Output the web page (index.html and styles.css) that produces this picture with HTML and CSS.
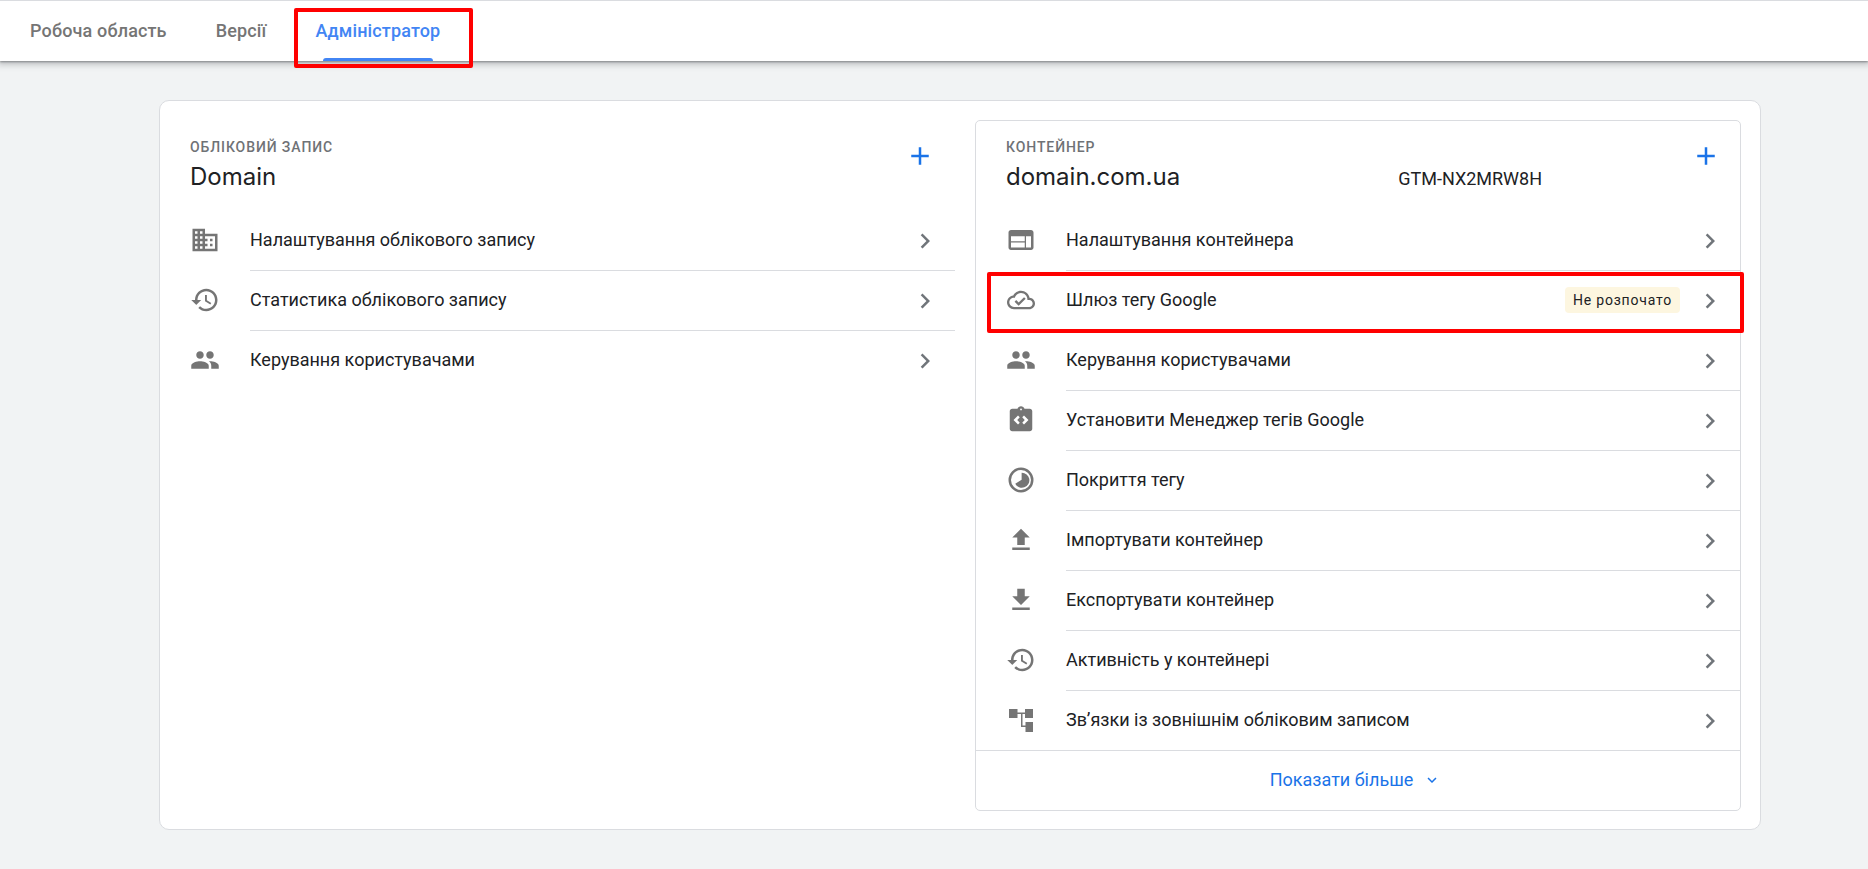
FILE: index.html
```html
<!DOCTYPE html>
<html lang="uk">
<head>
<meta charset="utf-8">
<title>Адміністратор</title>
<link rel="stylesheet" href="styles.css">
</head>
<body>
<svg class="defs" width="0" height="0" aria-hidden="true">
  <symbol id="i-domain" viewBox="0 0 24 24"><path d="M12 7V3H2v18h20V7H12zM6 19H4v-2h2v2zm0-4H4v-2h2v2zm0-4H4V9h2v2zm0-4H4V5h2v2zm4 12H8v-2h2v2zm0-4H8v-2h2v2zm0-4H8V9h2v2zm0-4H8V5h2v2zm10 12h-8v-2h2v-2h-2v-2h2v-2h-2V9h8v10zm-2-8h-2v2h2v-2zm0 4h-2v2h2v-2z"/></symbol>
  <symbol id="i-history" viewBox="0 0 24 24"><path d="M13 3c-4.97 0-9 4.03-9 9H1l3.89 3.89.07.14L9 12H6c0-3.87 3.13-7 7-7s7 3.13 7 7-3.13 7-7 7c-1.93 0-3.68-.79-4.94-2.06l-1.42 1.42C8.27 19.99 10.51 21 13 21c4.97 0 9-4.03 9-9s-4.03-9-9-9zm-1 5v5l4.28 2.54.72-1.21-3.5-2.08V8H12z"/></symbol>
  <symbol id="i-people" viewBox="0 0 24 24"><path d="M16 11c1.66 0 2.99-1.34 2.99-3S17.66 5 16 5c-1.66 0-3 1.34-3 3s1.34 3 3 3zm-8 0c1.66 0 2.99-1.34 2.99-3S9.66 5 8 5C6.34 5 5 6.34 5 8s1.34 3 3 3zm0 2c-2.33 0-7 1.17-7 3.5V19h14v-2.5c0-2.33-4.67-3.5-7-3.5zm8 0c-.29 0-.62.02-.97.05 1.16.84 1.97 1.97 1.97 3.45V19h6v-2.5c0-2.33-4.67-3.5-7-3.5z"/></symbol>
  <symbol id="i-web" viewBox="0 0 24 24"><path d="M20 4H4c-1.1 0-1.99.9-1.99 2L2 18c0 1.1.9 2 2 2h16c1.1 0 2-.9 2-2V6c0-1.1-.9-2-2-2zm-5 14H4v-4h11v4zm0-5H4V9h11v4zm5 5h-4V9h4v9z"/></symbol>
  <symbol id="i-cloud" viewBox="0 0 24 24"><path d="M19.35 10.04C18.67 6.59 15.64 4 12 4 9.11 4 6.6 5.64 5.35 8.04 2.34 8.36 0 10.91 0 14c0 3.31 2.69 6 6 6h13c2.76 0 5-2.24 5-5 0-2.64-2.05-4.78-4.65-4.96zM19 18H6c-2.21 0-4-1.79-4-4s1.79-4 4-4h.71C7.37 7.69 9.48 6 12 6c3.04 0 5.5 2.46 5.5 5.5v.5H19c1.66 0 3 1.34 3 3s-1.34 3-3 3zm-9-3.82l-2.09-2.09L6.5 13.5 10 17l6.01-6.01-1.41-1.41z"/></symbol>
  <symbol id="i-install" viewBox="0 0 24 24"><path fill-rule="evenodd" d="M19 3h-4.18C14.4 1.84 13.3 1 12 1s-2.4.84-2.82 2H5c-1.1 0-2 .9-2 2v14c0 1.1.9 2 2 2h14c1.1 0 2-.9 2-2V5c0-1.1-.9-2-2-2zm-7-.25a.75.75 0 1 1 0 1.5.75.75 0 0 1 0-1.5zM11 14.2 9.6 15.6 6 12l3.6-3.6L11 9.8 9 12l2 2.2zm3.4 1.4L13 14.2l2-2.2-2-2.2 1.4-1.4L18 12l-3.6 3.6z"/></symbol>
  <symbol id="i-cover" viewBox="0 0 24 24"><path d="M12 2a10 10 0 1 0 0 20 10 10 0 0 0 0-20zm0 18a8 8 0 1 1 0-16 8 8 0 0 1 0 16z"/><path d="M12.5 6.2v5.6L7.4 15a6 6 0 1 0 5.1-8.8z"/></symbol>
  <symbol id="i-upload" viewBox="0 0 24 24"><path d="M9 16h6v-6h4l-7-7-7 7h4zm-4 2h14v2H5z"/></symbol>
  <symbol id="i-download" viewBox="0 0 24 24"><path d="M19 9h-4V3H9v6H5l7 7 7-7zM5 18v2h14v-2H5z"/></symbol>
  <symbol id="i-links" viewBox="0 0 24 24"><path d="M2.4 3.2h6.8V6h6V3.200h6.400v7.200h-6.400V7.200h-2V16.400h2.400v-2.800h6v8h-6v-4h-3.600V7.200H9.200v3.200H2.400z"/></symbol>
  <symbol id="i-chev" viewBox="0 0 24 24"><path d="M10 6 8.59 7.41 13.17 12l-4.58 4.59L10 18l6-6z"/></symbol>
  <symbol id="i-plus" viewBox="0 0 24 24"><path d="M19 13h-6v6h-2v-6H5v-2h6V5h2v6h6v2z"/></symbol>
  <symbol id="i-down" viewBox="0 0 24 24"><path d="M7.410 8.590 12 13.170l4.590-4.580L18 10l-6 6-6-6z"/></symbol>
</svg>

<header class="topbar">
  <nav class="tabs">
    <a class="tab">Робоча область</a>
    <a class="tab">Версії</a>
    <a class="tab tab-active">Адміністратор</a>
  </nav>
</header>

<main class="page">
  <section class="card">
    <div class="col col-account">
      <div class="col-head">
        <div class="col-titles">
          <div class="eyebrow">ОБЛІКОВИЙ ЗАПИС</div>
          <div class="name">Domain</div>
        </div>
        <svg class="plus"><use href="#i-plus"/></svg>
      </div>
      <ul class="list">
        <li class="row"><svg class="ico"><use href="#i-domain"/></svg><span class="label">Налаштування облікового запису</span><svg class="chev"><use href="#i-chev"/></svg></li>
        <li class="row"><svg class="ico"><use href="#i-history"/></svg><span class="label">Статистика облікового запису</span><svg class="chev"><use href="#i-chev"/></svg></li>
        <li class="row"><svg class="ico"><use href="#i-people"/></svg><span class="label">Керування користувачами</span><svg class="chev"><use href="#i-chev"/></svg></li>
      </ul>
    </div>

    <div class="col col-container">
      <div class="col-head">
        <div class="col-titles">
          <div class="eyebrow">КОНТЕЙНЕР</div>
          <div class="name-line"><span class="name">domain.com.ua</span><span class="gtm">GTM-NX2MRW8H</span></div>
        </div>
        <svg class="plus"><use href="#i-plus"/></svg>
      </div>
      <ul class="list">
        <li class="row"><svg class="ico"><use href="#i-web"/></svg><span class="label">Налаштування контейнера</span><svg class="chev"><use href="#i-chev"/></svg></li>
        <li class="row"><svg class="ico ico-cloud"><use href="#i-cloud"/></svg><span class="label">Шлюз тегу Google</span><span class="badge">Не розпочато</span><svg class="chev"><use href="#i-chev"/></svg></li>
        <li class="row"><svg class="ico"><use href="#i-people"/></svg><span class="label">Керування користувачами</span><svg class="chev"><use href="#i-chev"/></svg></li>
        <li class="row"><svg class="ico"><use href="#i-install"/></svg><span class="label">Установити Менеджер тегів Google</span><svg class="chev"><use href="#i-chev"/></svg></li>
        <li class="row"><svg class="ico"><use href="#i-cover"/></svg><span class="label">Покриття тегу</span><svg class="chev"><use href="#i-chev"/></svg></li>
        <li class="row"><svg class="ico"><use href="#i-upload"/></svg><span class="label">Імпортувати контейнер</span><svg class="chev"><use href="#i-chev"/></svg></li>
        <li class="row"><svg class="ico"><use href="#i-download"/></svg><span class="label">Експортувати контейнер</span><svg class="chev"><use href="#i-chev"/></svg></li>
        <li class="row"><svg class="ico"><use href="#i-history"/></svg><span class="label">Активність у контейнері</span><svg class="chev"><use href="#i-chev"/></svg></li>
        <li class="row"><svg class="ico"><use href="#i-links"/></svg><span class="label">Зв’язки із зовнішнім обліковим записом</span><svg class="chev"><use href="#i-chev"/></svg></li>
      </ul>
      <div class="more"><span>Показати більше</span><svg class="more-ico"><use href="#i-down"/></svg></div>
    </div>
  </section>
</main>

<div class="mark mark-tab"></div>
<div class="mark mark-row"></div>
</body>
</html>
```

FILE: styles.css
```css
* { box-sizing: border-box; }
html, body { margin: 0; height: 100%; }
body {
  background: #f1f3f4;
  font-family: Roboto, "Liberation Sans", sans-serif;
  color: #202124;
  overflow: hidden;
  position: relative;
}
.defs { position: absolute; }

.topbar {
  height: 61px;
  background: #fff;
  border-top: 1px solid #dadce0;
  box-shadow: 0 1px 2px rgba(60,64,67,.5), 0 2px 6px 2px rgba(60,64,67,.25);
}
.tabs { display: flex; height: 60px; padding-left: 5.500px; }
.tab {
  padding: 19px 24.500px 0;
  font-size: 18px;
  font-weight: 500;
  letter-spacing: .15px;
  color: #757575;
  line-height: 22px;
  position: relative;
}
.tab-active { color: #4285f4; }
.tab-active::after {
  content: "";
  position: absolute;
  left: 32px; right: 32px; bottom: 0;
  height: 3px;
  background: #4285f4;
  border-radius: 3px 3px 0 0;
}

.page { padding: 39px 0 0 159px; }
.card {
  width: 1602px;
  height: 730px;
  background: #fff;
  border: 1px solid #dadce0;
  border-radius: 10px;
  display: flex;
  align-items: flex-start;
}
.col-account { width: 815px; padding: 19px 20px 0 30px; }
.col-container {
  width: 766px;
  margin-top: 19px;
  height: 691px;
  border: 1px solid #dadce0;
  border-radius: 5px;
  padding-left: 30px;
}
.col-head { display: flex; justify-content: space-between; position: relative; }
.col-account .col-head { height: 90px; padding-top: 20px; }
.col-container .col-head { height: 89px; padding-top: 19px; }
.eyebrow {
  font-size: 14px;
  font-weight: 500;
  letter-spacing: .9px;
  line-height: 14px;
  color: #6f7276;
}
.name {
  font-size: 24px;
  line-height: 32px;
  margin-top: 7px;
  display: block;
  font-family: Inter, Roboto, sans-serif;
  letter-spacing: 0;
  color: #202124;
}
.name-line { display: flex; align-items: baseline; }
.gtm { font-size: 18px; margin-left: 218px; color: #202124; }
.plus { width: 30px; height: 30px; fill: #1a73e8; position: absolute; }
.col-account .plus { right: 20px; top: 21px; }
.col-container .plus { right: 19px; top: 20px; }

.list { list-style: none; margin: 0; padding: 0; }
.row { display: flex; align-items: center; height: 60px; position: relative; }
.row + .row::before {
  content: "";
  position: absolute;
  left: 60px; right: 0; top: 0;
  height: 1px;
  background: #dadce0;
}
.ico { width: 30px; height: 30px; fill: #757575; margin-right: 30px; flex: none; }
.ico-cloud { width: 28px; height: 28px; margin: 0 31px 0 1px; }
.label { font-size: 18px; flex: 1; color: #202124; padding-bottom: 2px; }
.chev { width: 30px; height: 30px; fill: #70757a; flex: none; margin: 1px 15px 0 0; }
.badge {
  background: #fdf6e0;
  border-radius: 4px;
  font-size: 14px;
  letter-spacing: .8px;
  height: 26px;
  line-height: 26px;
  padding: 0 8px;
  margin-right: 15px;
}

.more {
  margin-left: -30px;
  height: 60px;
  padding: 0 5px 2px 0;
  border-top: 1px solid #dadce0;
  display: flex;
  align-items: center;
  justify-content: center;
  color: #1a73e8;
  font-size: 18px;
  gap: 10px;
}
.more-ico { width: 18px; height: 18px; fill: #1a73e8; }

.mark { position: absolute; border: 4px solid #f00; border-radius: 2px; pointer-events: none; }
.mark-tab { left: 294px; top: 8px; width: 179px; height: 60px; }
.mark-row { left: 987px; top: 272px; width: 757px; height: 61px; }
```
